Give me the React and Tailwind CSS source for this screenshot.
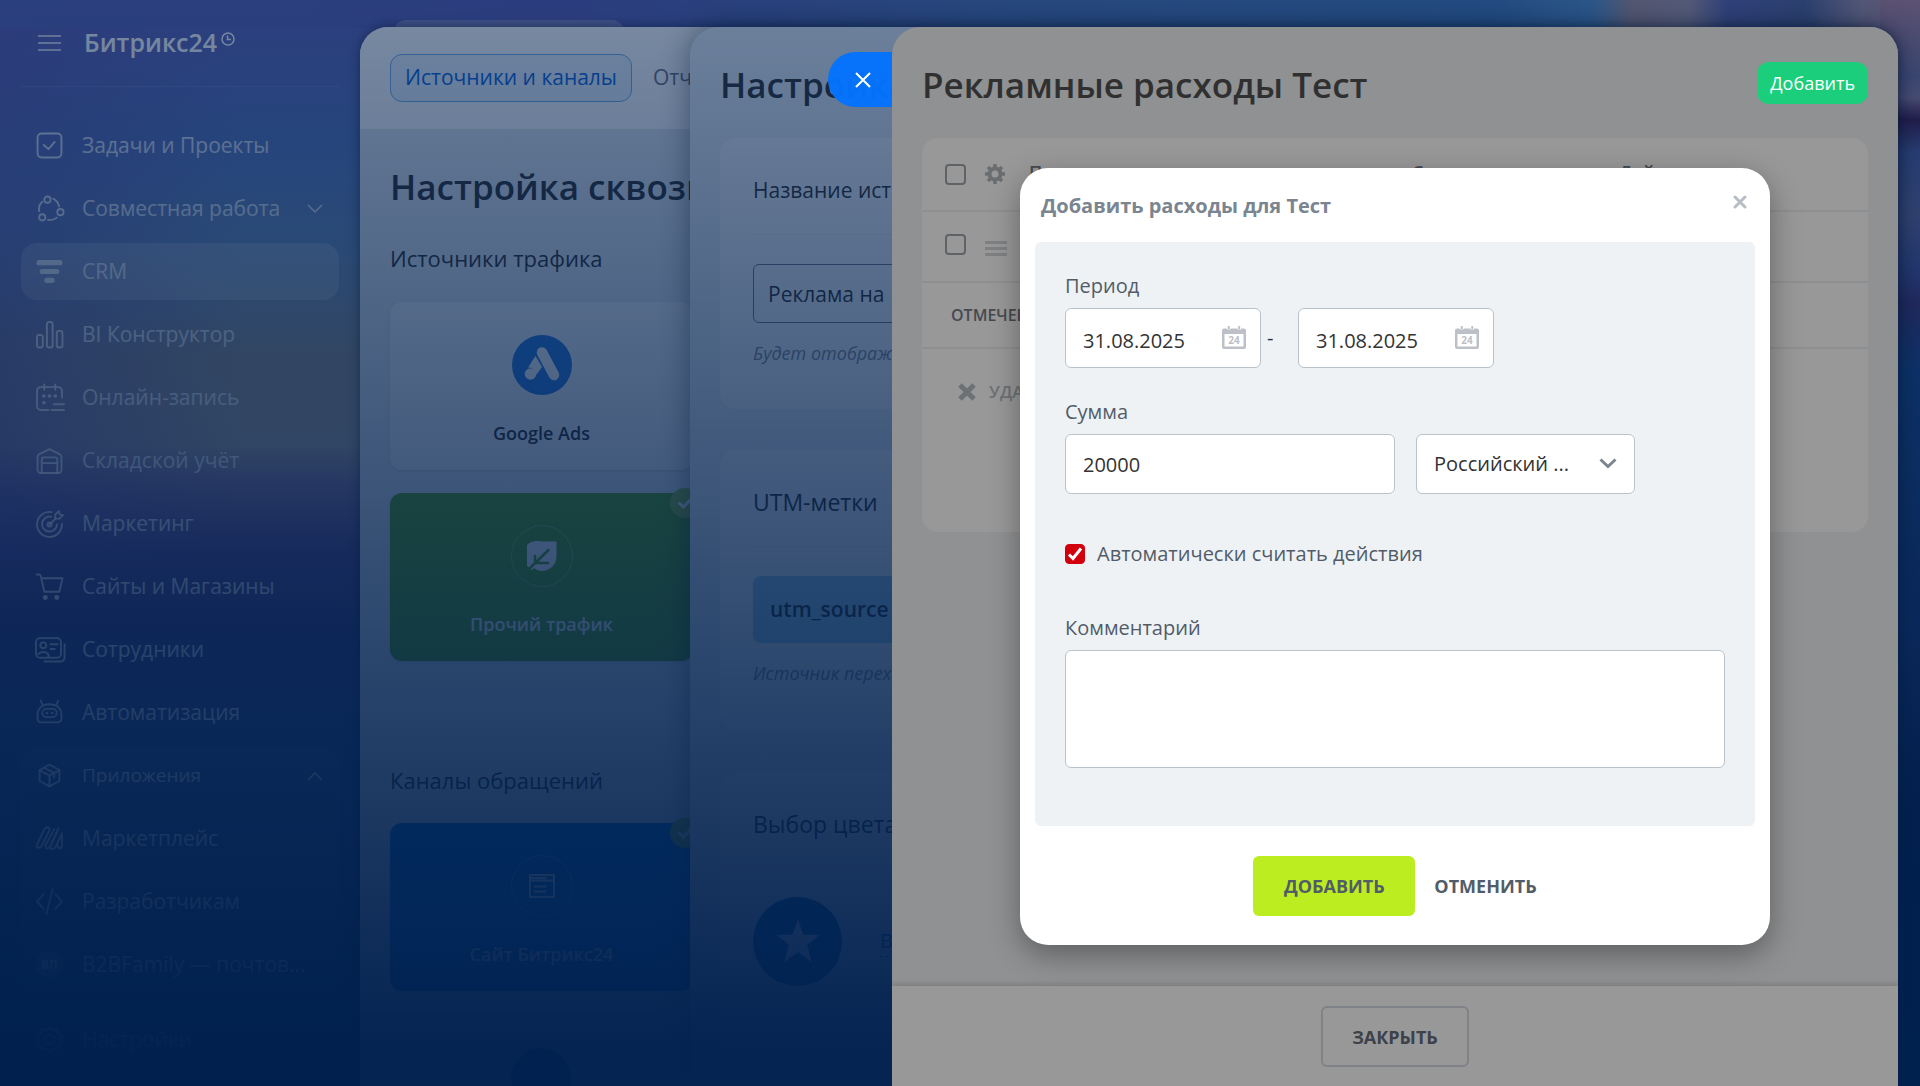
import React, { useState } from 'react';
import clsx from 'clsx';

const menuIcons = {
  tasks: (
    <>
      <rect x="1.5" y="1.5" width="23" height="23" rx="4" />
      <path d="M7.5 12.5l4.5 4 6-7" />
    </>
  ),
  collab: (
    <>
      <circle cx="11" cy="4.5" r="3" />
      <circle cx="23.5" cy="16.5" r="3" />
      <circle cx="6" cy="21.5" r="3" />
      <path d="M3 15.5C2.500 11 3.500 8.500 6 6.500M16.500 3.500c3 1.500 5 4 5.800 7.500M11.500 24c3.500.6 6-.2 8.500-2.200" />
    </>
  ),
  crm: <path d="M3 4.500h20M6 13h14M10.500 21.500h5" strokeWidth="5" />,
  bi: (
    <>
      <rect x="1" y="13.500" width="5.500" height="12" rx="2" />
      <rect x="10.500" y="1" width="5.500" height="24.500" rx="2" />
      <rect x="20" y="9.500" width="5.500" height="16" rx="2" />
    </>
  ),
  booking: (
    <>
      <path d="M12 25H4.500A3.500 3.500 0 0 1 1 21.500V6.500A3.500 3.500 0 0 1 4.500 3h17A3.500 3.500 0 0 1 25 6.500V13M8 .5v5M18.500.5v5M17 19.500h10M15 25h12" />
      <path d="M7.500 11.500h.1M13 11.500h.1M18.500 11.500h.1M7.500 18h.1" strokeWidth="3.500" />
    </>
  ),
  store: (
    <>
      <path d="M1.500 9.500a3 3 0 0 1 1.800-2.700L13 2l9.700 4.800a3 3 0 0 1 1.800 2.700V22a3 3 0 0 1-3 3h-17a3 3 0 0 1-3-3z" />
      <path d="M5.500 25V12a2 2 0 0 1 2-2h11a2 2 0 0 1 2 2v13M6 15.500h14" />
    </>
  ),
  marketing: (
    <>
      <path d="M15 2A12 12 0 1 0 25 13.500M14.500 6.500A7.200 7.200 0 1 0 20.200 14M13 14l6-6" />
      <path d="M18.500 8V4.500L22 1l.8 3.200L26 5l-3.500 3.500z" />
      <circle cx="13" cy="14" r="2" />
    </>
  ),
  cart: (
    <>
      <path d="M.5 1.500H3a1.500 1.500 0 0 1 1.500 1.200L8 18h14.500L25.500 5H5" />
      <circle cx="9" cy="23.500" r="1.500" fill="currentColor" />
      <circle cx="20" cy="23.500" r="1.500" fill="currentColor" />
    </>
  ),
  staff: (
    <>
      <rect x="0" y="2" width="24" height="19" rx="4" />
      <circle cx="7" cy="9" r="2.800" />
      <path d="M2 17.500c2-2.800 8-2.800 10 0V20M14 8h7M14 12.500h4M27.500 8v13a3.500 3.500 0 0 1-3.500 3.500H8" />
    </>
  ),
  robot: (
    <>
      <path d="M1.500 15.500C1.500 9 6 5 13 5s11.500 4 11.500 10.500V19a3.500 3.500 0 0 1-3.500 3.500H5A3.500 3.500 0 0 1 1.500 19zM6 5L4.500 1.500M20 5l1.500-3.500" />
      <rect x="6" y="9.500" width="14" height="8" rx="4" />
      <path d="M10.500 13.500h.1M15.500 13.500h.1" strokeWidth="2.500" />
    </>
  ),
  apps: (
    <>
      <path d="M13 2.500l9.500 5.200v10.600L13 23.500l-9.500-5.200V7.700z" />
      <path d="M3.500 8L13 13l9.500-5M13 13v10M8 5.500l9.500 5.200v4" />
    </>
  ),
  market: <path d="M9 3c3-2 5 0 3.500 3L5.500 20c-1.500 3-6 2.500-4.500-1L7 6c.5-1 1-2.200 2-3zM17.500 4L9.500 19c-1.500 4 2.500 4.500 4 2l7-14M21.500 3L14 20c-1.500 3.500 3 4 4.500 1.500L25 8v12c0 3-4.500 3.500-4 0" />,
  code: <path d="M7.500 6L1 13l6.500 7M18.500 6L25 13l-6.500 7M16 1L10 25" />,
  gear: (
    <>
      <circle cx="13" cy="13" r="4.500" />
      <path d="M13 1.500l3 2.500 3.800-.8 1.200 3.700 3.500 1.700L23.500 13l1 4.400-3.500 1.700-1.200 3.700L16 22l-3 2.500-3-2.500-3.800.8L5 19.100l-3.500-1.700L2.500 13l-1-4.400L5 6.900l1.200-3.700L10 4z" />
    </>
  ),
};

const menuItems = [
  { id: 'tasks', label: 'Задачи и Проекты' },
  { id: 'collab', label: 'Совместная работа', arrow: 'down' },
  { id: 'crm', label: 'CRM', active: true },
  { id: 'bi', label: 'BI Конструктор' },
  { id: 'booking', label: 'Онлайн-запись' },
  { id: 'store', label: 'Складской учёт' },
  { id: 'marketing', label: 'Маркетинг' },
  { id: 'cart', label: 'Сайты и Магазины' },
  { id: 'staff', label: 'Сотрудники' },
  { id: 'robot', label: 'Автоматизация' },
];

const appItems = [
  { id: 'apps', label: 'Приложения', arrow: 'up', small: true },
  { id: 'market', label: 'Маркетплейс' },
  { id: 'code', label: 'Разработчикам' },
  { id: 'b2b', label: 'B2BFamily — почтов...', badge: 'ВП' },
];

const MenuItem = ({ item }) => (
  <a
    href="#"
    className={clsx('flex h-[57px] items-center rounded-2xl pr-4 pl-[15px] text-white/80', item.active && 'bg-white/20')}
  >
    {item.badge ? (
      <span className="flex size-[27px] shrink-0 items-center justify-center rounded-full bg-white/20 text-xs font-bold">{item.badge}</span>
    ) : (
      <svg
        viewBox="0 0 26 26"
        className="size-[27px] shrink-0 overflow-visible"
        fill="none"
        stroke="currentColor"
        strokeWidth="1.8"
        strokeLinecap="round"
        strokeLinejoin="round"
      >
        {menuIcons[item.id]}
      </svg>
    )}
    <span className={clsx('ml-[19px] flex-1 whitespace-nowrap', item.small ? 'text-[19px]' : 'text-[21px]')}>{item.label}</span>
    {item.arrow && (
      <svg viewBox="0 0 16 10" className="h-[10px] w-4" fill="none" stroke="currentColor" strokeWidth="1.5">
        <path d={item.arrow === 'down' ? 'M1 1l7 7 7-7' : 'M1 9l7-7 7 7'} />
      </svg>
    )}
  </a>
);

const Sidebar = () => (
  <aside className="flex w-[360px] shrink-0 flex-col px-[21px] text-white">
    <div className="flex h-[87px] items-center border-b border-white/10 pl-[17px]">
      <button type="button" aria-label="Меню" className="flex flex-col gap-[5px]">
        <span className="h-[2px] w-[23px] bg-white/70" />
        <span className="h-[2px] w-[23px] bg-white/70" />
        <span className="h-[2px] w-[23px] bg-white/70" />
      </button>
      <span className="ml-[23px] text-[25px] font-semibold">Битрикс24</span>
      <svg viewBox="0 0 14 14" className="mb-2 ml-1 size-[14px]" fill="none" stroke="currentColor" strokeWidth="1.5">
        <circle cx="7" cy="7" r="6" />
        <path d="M6.500 3.500v4H10" />
      </svg>
    </div>
    <nav className="mt-[30px] flex flex-col gap-[6px]">
      {menuItems.map((item) => (
        <MenuItem key={item.id} item={item} />
      ))}
      <div className="flex flex-col gap-[6px] rounded-2xl bg-white/5">
        {appItems.map((item) => (
          <MenuItem key={item.id} item={item} />
        ))}
      </div>
      <div className="mt-3">
        <MenuItem item={{ id: 'gear', label: 'Настройки' }} />
      </div>
    </nav>
  </aside>
);

const CheckBadge = () => (
  <span className="absolute -top-[5px] -right-[7px] flex size-[30px] items-center justify-center rounded-full bg-[#9ac43a]">
    <svg viewBox="0 0 16 12" className="w-4" fill="none" stroke="#fff" strokeWidth="3">
      <path d="M1.500 5.500l5 4.500 8-8.500" />
    </svg>
  </span>
);

const SourceCard = ({ title, className, icon, ring, checked }) => (
  <a
    href="#"
    className={clsx('relative flex h-[168px] w-[303px] flex-col items-center rounded-xl pt-8 shadow-sm', className)}
  >
    <span className={clsx('flex size-[62px] items-center justify-center rounded-full', ring && 'border border-white/30')}>{icon}</span>
    <span className="mt-[23px] text-lg leading-7 font-semibold">{title}</span>
    {checked && <CheckBadge />}
  </a>
);

const SourcesPanel = () => (
  <section className="absolute top-[27px] right-[22px] bottom-0 left-[360px] overflow-hidden rounded-t-[28px] bg-[#e3e9ef] whitespace-nowrap text-[#333] shadow-[0_0_12px_rgba(0,0,0,0.5)]">
    <div className="flex h-[102px] items-start bg-white pt-[27px] pl-[30px] text-[21px]">
      <a href="#" className="flex h-12 items-center rounded-xl border border-[#6fb1ec] bg-[#e8f3fd] px-[14px] text-[#0b66e0]">
        Источники и каналы
      </a>
      <a href="#" className="flex h-12 items-center pl-[21px] text-[#6a737f]">Отчёт</a>
    </div>
    <div className="pl-[30px]">
      <h1 className="mt-[30px] pt-1 text-[35px] leading-[48px] font-semibold">Настройка сквозной</h1>
      <h2 className="mt-[31px] text-[22px] leading-[32px]">Источники трафика</h2>
      <div className="mt-7 flex flex-col gap-[23px]">
        <SourceCard
          title="Google Ads"
          className="bg-white/60"
          icon={
            <svg viewBox="0 0 60 60" className="size-[60px]">
              <circle cx="30" cy="30" r="30" fill="#2f7de0" />
              <path d="M30 17.500L42 40" stroke="#fff" strokeWidth="10.500" strokeLinecap="round" />
              <path d="M23.500 21l6.500 11-5.500 7.500c-.7-4.500-4.500-7.500-8.500-7z" fill="#fff" />
              <circle cx="18.500" cy="39" r="5.800" fill="#fff" />
            </svg>
          }
        />
        <SourceCard
          title="Прочий трафик"
          className="bg-[#5fa818] text-white"
          ring
          checked
          icon={
            <svg viewBox="0 0 30 30" className="size-[30px]">
              <path d="M29.500.5v14.500A14.500 14.500 0 0 1 7 27.300L4.500 29 2 26.500A14.500 14.500 0 0 1 14 .5z" fill="#fff" />
              <path d="M3 27L21.500 9M8 15v7h13" fill="none" stroke="#5fa818" strokeWidth="2.500" strokeLinecap="round" />
            </svg>
          }
        />
      </div>
      <h2 className="mt-[103px] text-[22px] leading-[32px]">Каналы обращений</h2>
      <div className="mt-[27px]">
        <SourceCard
          title="Сайт Битрикс24"
          className="bg-[#1575cf] text-white"
          ring
          checked
          icon={
            <svg viewBox="0 0 26 24" className="w-[26px]" fill="none" stroke="#fff" strokeWidth="2">
              <path d="M1 1h24v22H1z" />
              <path d="M1 4h17M1 6.500h24M5 12.500h12M5 17.500h12" />
            </svg>
          }
        />
      </div>
      <div className="mt-[57px] ml-[121px] size-[60px] rounded-full bg-[#1b5fa8]" />
    </div>
  </section>
);

const SettingsPanel = () => (
  <section className="absolute top-[27px] right-[22px] bottom-0 left-[690px] overflow-hidden rounded-t-[28px] bg-[#e6edf2] pl-[30px] whitespace-nowrap text-[#333] shadow-[0_0_30px_rgba(0,0,0,0.45)]">
    <h1 className="mt-[30px] pt-1 text-[35px] leading-[48px] font-semibold">Настройка</h1>
    <div className="mt-[29px] h-[271px] rounded-2xl bg-white/50 px-[33px] pt-9">
      <h2 className="text-[21px] leading-8">
        <label htmlFor="source-name">Название источника</label>
      </h2>
      <div className="mt-7 border-t border-black/5 pt-[29px]">
        <input
          id="source-name"
          defaultValue="Реклама на"
          className="h-[59px] w-full rounded-md border border-[#6d7a8c] bg-transparent px-[14px] text-[21px]"
        />
        <p className="mt-4 text-lg leading-7 text-[#868d95] italic">Будет отображаться в отчётах</p>
      </div>
    </div>
    <div className="mt-[41px] h-[279px] rounded-2xl bg-white/50 px-[33px] pt-9">
      <h2 className="text-[23px] leading-8">UTM-метки</h2>
      <div className="mt-7 border-t border-black/5 pt-[29px]">
        <div className="flex h-[67px] items-center rounded-lg bg-[#a0d2ea] px-[17px] text-[21px] font-semibold">utm_source</div>
        <p className="mt-4 text-lg leading-7 text-[#868d95] italic">Источник перехода</p>
      </div>
    </div>
    <div className="mt-[43px] h-[279px] rounded-2xl bg-white/50 px-[33px] pt-9">
      <h2 className="text-[23px] leading-8">Выбор цвета</h2>
      <div className="mt-[57px] flex items-center gap-[38px]">
        <span className="flex size-[89px] items-center justify-center rounded-full bg-[#0a6bb0]">
          <svg viewBox="0 0 24 23" className="w-11" fill="#fff">
            <path d="M12 0l3 8h9l-7 5.500L19.500 23 12 17.500 4.500 23 7 13.500 0 8h9z" />
          </svg>
        </span>
        <a href="#" className="border-b border-dashed border-[#2067b0] text-[20px] text-[#2067b0]">Выбрать</a>
      </div>
    </div>
  </section>
);

const GridCheckbox = ({ label }) => (
  <input
    type="checkbox"
    aria-label={label}
    className="block size-[21px] appearance-none rounded-[4px] border-2 border-[#5f6368] checked:bg-[#575b60]"
  />
);

const ExpensesPanel = () => (
  <section className="absolute top-[27px] right-[22px] bottom-0 left-[892px] flex flex-col overflow-hidden rounded-t-[28px] bg-[#8f9193]">
    <div className="flex flex-1 flex-col px-[30px]">
      <div className="flex h-[111px] items-center justify-between">
        <h1 className="pt-1 text-[35px] leading-[48px] font-semibold text-[#303030]">Рекламные расходы Тест</h1>
        <button type="button" className="h-[42px] rounded-xl bg-[#1bce7b] px-[13px] text-lg text-white">
          Добавить
        </button>
      </div>
      <div className="h-[394px] overflow-hidden rounded-2xl bg-[#989898] text-[#454a50]">
        <table className="w-full table-fixed text-left text-lg">
          <colgroup>
            <col className="w-[63px]" />
            <col className="w-[44px]" />
            <col className="w-[383px]" />
            <col className="w-[207px]" />
            <col />
          </colgroup>
          <thead>
            <tr className="h-[73px] border-b-2 border-[#8d8f91]">
              <th className="pl-[23px]">
                <GridCheckbox label="Выбрать все" />
              </th>
              <th>
                <button type="button" aria-label="Настройки" className="block">
                  <svg viewBox="0 0 20 20" className="size-5" fill="none" stroke="#6b6e71">
                    <circle cx="10" cy="10" r="5.500" strokeWidth="4" />
                    <path d="M10 0v4M10 16v4M0 10h4M16 10h4M3 3l2.500 2.500M14.500 14.500L17 17M17 3l-2.500 2.500M3 17l2.500-2.500" strokeWidth="3.500" />
                  </svg>
                </button>
              </th>
              <th className="pb-1 font-semibold">Период</th>
              <th className="pb-1 font-semibold">Сумма</th>
              <th className="pb-1 font-semibold">Действия</th>
            </tr>
          </thead>
          <tbody>
            <tr className="h-[71px] border-b-2 border-[#8d8f91]">
              <td className="pb-1 pl-[23px]">
                <GridCheckbox label="Выбрать строку" />
              </td>
              <td className="pt-1">
                <button type="button" aria-label="Действия со строкой" className="flex flex-col gap-[3px]">
                  <span className="h-[3px] w-[22px] bg-[#7e8082]" />
                  <span className="h-[3px] w-[22px] bg-[#7e8082]" />
                  <span className="h-[3px] w-[22px] bg-[#7e8082]" />
                </button>
              </td>
              <td>31.08.2025</td>
              <td>0</td>
              <td>0</td>
            </tr>
          </tbody>
        </table>
        <div className="flex h-[66px] items-center border-b-2 border-[#8d8f91] pl-[29px] text-base font-semibold">ОТМЕЧЕНО: 0 / 1</div>
        <button type="button" className="flex h-[86px] items-center gap-[13px] pl-9 text-[17px] font-semibold text-[#6e7174]">
          <svg viewBox="0 0 18 18" className="size-[18px]" stroke="currentColor" strokeWidth="5">
            <path d="M2 2l14 14M16 2L2 16" />
          </svg>
          УДАЛИТЬ
        </button>
      </div>
    </div>
    <div className="flex h-[100px] items-start justify-center bg-[#989898] pt-5 shadow-[0_-2px_5px_rgba(0,0,0,0.15)]">
      <button type="button" className="h-[61px] rounded-md border-2 border-[#7f8286] px-[29px] text-lg font-bold text-[#3c4249]">
        ЗАКРЫТЬ
      </button>
    </div>
  </section>
);

const DateField = ({ label, value, onChange }) => (
  <div className="relative">
    <input
      type="text"
      aria-label={label}
      value={value}
      onChange={(e) => onChange(e.target.value)}
      className="h-[60px] w-[196px] rounded-md border border-[#bac3ca] bg-white pt-1 pr-12 pl-[17px] text-[#333] outline-none"
    />
    <svg viewBox="0 0 24 23" className="pointer-events-none absolute top-[18px] right-[15px] w-6">
      <path
        fillRule="evenodd"
        fill="#bdc1c7"
        d="M2 2.500h2.500a2.500 2.500 0 0 0 4.500 0h6a2.500 2.500 0 0 0 4.500 0H22a2 2 0 0 1 2 2V21a2 2 0 0 1-2 2H2a2 2 0 0 1-2-2V4.500a2 2 0 0 1 2-2zM2.500 8v12.500h19V8z"
      />
      <path d="M6.800.8v2M17.200.8v2" stroke="#bdc1c7" strokeWidth="2" strokeLinecap="round" />
      <text x="12" y="18" textAnchor="middle" fontSize="10" fontWeight="700" fill="#bdc1c7">24</text>
    </svg>
  </div>
);

const AddExpenseModal = () => {
  const [dateFrom, setDateFrom] = useState('31.08.2025');
  const [dateTo, setDateTo] = useState('31.08.2025');
  const [amount, setAmount] = useState('20000');
  const [auto, setAuto] = useState(true);

  return (
    <div className="absolute top-[168px] right-[22px] left-[892px] flex justify-center">
      <div
        role="dialog"
        aria-labelledby="expense-title"
        className="w-[750px] rounded-[28px] bg-white px-[15px] pb-[29px] shadow-[0_10px_30px_rgba(0,0,0,0.35)]"
      >
        <div className="flex h-[74px] items-center justify-between px-[6px] pt-[2px]">
          <h2 id="expense-title" className="text-[20px] font-bold text-[#7b858f]">Добавить расходы для Тест</h2>
          <button type="button" aria-label="Закрыть" className="mr-[2px] mb-2">
            <svg viewBox="0 0 14 14" className="size-[14px]" stroke="#b7bdc5" strokeWidth="3" strokeLinecap="round">
              <path d="M2 2l10 10M12 2L2 12" />
            </svg>
          </button>
        </div>

        <div className="rounded-md bg-[#eef2f4] px-[30px] pt-[30px] pb-[58px] text-[20px] text-[#525c69]">
          <p className="leading-7">Период</p>
          <div className="mt-2 flex items-center">
            <DateField label="Период с" value={dateFrom} onChange={setDateFrom} />
            <span className="w-[37px] pl-[6px] text-[#333]">-</span>
            <DateField label="Период по" value={dateTo} onChange={setDateTo} />
          </div>

          <label htmlFor="amount" className="mt-[30px] block leading-7">Сумма</label>
          <div className="mt-2 flex gap-[21px]">
            <input
              id="amount"
              type="text"
              value={amount}
              onChange={(e) => setAmount(e.target.value)}
              className="h-[60px] w-[330px] rounded-md border border-[#bac3ca] bg-white px-[17px] text-[#333] outline-none"
            />
            <div className="relative">
              <select
                aria-label="Валюта"
                className="h-[60px] w-[219px] appearance-none rounded-md border border-[#bac3ca] bg-white pr-12 pl-[17px] text-[#333] outline-none"
              >
                <option>Российский ...</option>
              </select>
              <svg
                viewBox="0 0 18 11"
                className="pointer-events-none absolute top-6 right-[18px] w-[18px]"
                fill="none"
                stroke="#7b858f"
                strokeWidth="3"
              >
                <path d="M1.500 1.500L9 8.500l7.500-7" />
              </svg>
            </div>
          </div>

          <label className="mt-[46px] flex items-center gap-3 leading-7">
            <span className="relative flex">
              <input
                type="checkbox"
                checked={auto}
                onChange={(e) => setAuto(e.target.checked)}
                className="size-5 appearance-none rounded-[4px] border border-[#8d97a5] bg-white checked:border-[#d2000d] checked:bg-[#d2000d]"
              />
              {auto && (
                <svg viewBox="0 0 20 20" className="pointer-events-none absolute inset-0" fill="none" stroke="#fff" strokeWidth="3">
                  <path d="M4 10.500l4 4 8-10" />
                </svg>
              )}
            </span>
            Автоматически считать действия
          </label>

          <label htmlFor="comment" className="mt-[46px] block leading-7">Комментарий</label>
          <textarea
            id="comment"
            className="mt-2 block h-[118px] w-full resize-none rounded-md border border-[#bac3ca] bg-white p-3 outline-none"
          />
        </div>

        <div className="mt-[30px] flex justify-center text-lg font-bold text-[#525c69]">
          <button type="button" className="h-[60px] w-[162px] rounded-md bg-[#bbed21]">ДОБАВИТЬ</button>
          <button type="button" className="pl-[19px]">ОТМЕНИТЬ</button>
        </div>
      </div>
    </div>
  );
};

export default function App() {
  return (
    <div className="relative h-screen overflow-hidden bg-[#5a63b0] font-['Open_Sans','Noto_Sans',sans-serif]">
      {/* Wallpaper */}
      <div className="absolute inset-0 bg-[linear-gradient(180deg,#5d5fb4_0%,#5a78bd_13%,#7090b8_23%,#9a968e_33%,#aca49c_41%,#8a7498_45%,#5c4a88_51%,#44407c_58%,#345088_68%,#203a60_100%)]" />
      <div className="absolute top-0 left-0 h-[560px] w-[240px] bg-[linear-gradient(90deg,rgba(98,84,168,0.5),rgba(98,84,168,0))]" />
      <div className="absolute inset-x-0 top-0 h-7 bg-[linear-gradient(90deg,#5a62b4_0%,#5a5cb2_30%,#5274b4_52%,#4a7cbc_78%,#5c94cc_83%,#b09498_85%,#b09aa8_88%,#6464a8_90%,#5c6494_94%,#b094a4_97%,#c08898_100%)]" />
      <div className="absolute inset-y-0 right-0 w-10 bg-[linear-gradient(180deg,#c08898_0%,#8878a0_7%,#a888a8_9%,#501848_11%,#6068a8_14%,#8078a8_20%,#6060a8_25%,#603878_28%,#2858a0_34%,#304888_60%,#102050_75%)]" />

      <div className="relative flex h-full">
        <Sidebar />
        <div className="flex-1 pt-5 pl-[34px]">
          <div className="h-10 w-[230px] rounded-xl bg-white/25" />
        </div>
      </div>

      <SourcesPanel />
      <SettingsPanel />

      {/* Slider backdrop */}
      <div className="absolute inset-0 bg-[linear-gradient(180deg,rgba(0,32,78,0.52)_0%,rgba(0,32,78,0.82)_62%,rgba(0,32,78,0.98)_96%)]" />

      <button
        type="button"
        aria-label="Закрыть"
        className="absolute top-[52px] left-[828px] flex h-[55px] w-[90px] items-center rounded-l-full bg-[#0473fd]/97 pl-[27px]"
      >
        <svg viewBox="0 0 16 16" className="size-4" stroke="#fff" strokeWidth="2">
          <path d="M1 1l14 14M15 1L1 15" />
        </svg>
      </button>

      <ExpensesPanel />
      <AddExpenseModal />
    </div>
  );
}
